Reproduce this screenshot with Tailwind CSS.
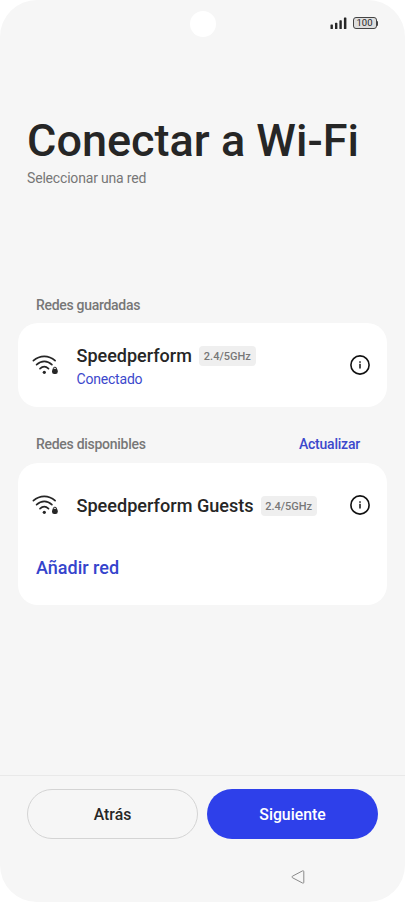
<!DOCTYPE html>
<html lang="es">
<head>
<meta charset="utf-8">
<title>Conectar a Wi-Fi</title>
<script src="https://cdn.jsdelivr.net/npm/@tailwindcss/browser@4"></script>
</head>
<body class="bg-white font-['Roboto',sans-serif]">
<svg class="hidden">
  <symbol id="wifi" viewBox="0 0 28 22">
    <g fill="none" stroke="#262626" stroke-width="1.7" stroke-linecap="round">
      <path d="M2.4 6.7C8.8.9 17.7.9 24.1 6.7"/>
      <path d="M5.6 10.7c4.7-4.4 10.7-4.4 15.3 0"/>
      <path d="M9 14.6c2.6-2.4 5.9-2.4 8.5 0"/>
    </g>
    <circle cx="13.3" cy="18.3" r="1.6" fill="#262626"/>
    <path d="M22.2 15.6v-.7a1.7 1.7 0 0 1 3.4 0v.7" fill="none" stroke="#262626" stroke-width="1"/>
    <rect x="21" y="14.7" width="5.8" height="5.2" rx="2.2" fill="#262626"/>
  </symbol>
  <symbol id="info" viewBox="0 0 20 20">
    <circle cx="10" cy="10" r="9.1" fill="none" stroke="#111" stroke-width="1.6"/>
    <rect x="9.2" y="6.3" width="1.6" height="1.5" fill="#222"/>
    <rect x="9.2" y="8.8" width="1.6" height="4.7" fill="#222"/>
  </symbol>
</svg>
<div class="relative flex h-[902px] w-[405px] flex-col overflow-hidden rounded-[37px] bg-[#f6f6f6] text-[#262626]">
  <div class="absolute left-[190px] top-[11px] size-[25.5px] rounded-full bg-white"></div>
  <header class="flex h-[47px] items-center justify-end gap-[5.5px] pr-[27px]">
    <svg class="mb-px h-3 w-[17px]" viewBox="0 0 17 12" fill="#262626"><rect x="0.5" y="7.5" width="2.4" height="4.5" rx=".6"/><rect x="5" y="5.8" width="2.4" height="6.2" rx=".6"/><rect x="9.4" y="3.3" width="2.4" height="8.7" rx=".6"/><rect x="13.9" y="0.5" width="2.5" height="11.5" rx=".6"/></svg>
    <div class="mb-px flex items-center">
      <div class="flex h-3 w-6 items-center justify-center rounded-[3px] border border-[#444] bg-[#dedede] text-[9.5px] leading-none">100</div>
      <div class="h-[5px] w-[1.5px] rounded-r-sm bg-[#444]"></div>
    </div>
  </header>
  <div class="px-[27px] pt-[66px]">
    <h1 class="h-[55px] whitespace-nowrap text-[45px] leading-[56px] font-medium">Conectar a Wi-Fi</h1>
    <p class="text-[14px] leading-5 tracking-[-0.18px] text-[#777]">Seleccionar una red</p>
  </div>
  <main class="flex-1 px-[18px] pt-[107px]">
    <h2 class="h-[28.3px] px-[18px] text-[14px] leading-5 font-medium tracking-[-0.3px] text-[#777]">Redes guardadas</h2>
    <section class="flex h-[83.4px] items-center rounded-[20px] bg-white pr-[17px] pl-[13px]">
      <svg class="h-[22px] w-7 shrink-0"><use href="#wifi"/></svg>
      <div class="ml-[17.5px] flex-1 pt-[6px]">
        <div class="flex h-[24px] items-center gap-[7px]"><span class="text-[18px] leading-6 font-medium">Speedperform</span><span class="h-5 rounded bg-[#efefef] px-[5px] text-[11px] leading-[21px] font-medium text-[#777]">2.4/5GHz</span></div>
        <p class="h-6 text-[14px] leading-[23px] tracking-[-0.2px] text-[#3c48cc]">Conectado</p>
      </div>
      <svg class="size-5 shrink-0"><use href="#info"/></svg>
    </section>
    <div class="flex h-[56.6px] items-center justify-between pr-[27px] pl-[18px] pt-[18px] text-[14px] leading-5 font-medium">
      <h2 class="tracking-[-0.28px] text-[#777]">Redes disponibles</h2>
      <span class="mt-px tracking-[-0.22px] text-[#3c48cc]">Actualizar</span>
    </div>
    <section class="h-[141.7px] rounded-[20px] bg-white">
      <div class="flex h-[84px] items-center pr-[17px] pl-[13px]">
        <svg class="h-[22px] w-7 shrink-0"><use href="#wifi"/></svg>
        <div class="mt-[2px] ml-[17.5px] flex flex-1 items-center gap-[7px] whitespace-nowrap"><span class="text-[18.1px] leading-6 font-medium">Speedperform Guests</span><span class="h-5 rounded bg-[#efefef] px-[4.5px] text-[11px] leading-[21px] font-medium text-[#777]">2.4/5GHz</span></div>
        <svg class="size-5 shrink-0"><use href="#info"/></svg>
      </div>
      <div class="px-[18px] pt-[9px] text-[18px] leading-6 font-medium text-[#3544cc]">Añadir red</div>
    </section>
  </main>
  <footer class="h-[127px] border-t border-[#e9e9e9] px-[27px] pt-[13px]">
    <div class="flex gap-[9px] text-[15.8px] font-medium">
      <button class="h-[50px] w-[171px] rounded-full border border-[#d4d4d4] pt-[2px]">Atrás</button>
      <button class="h-[50px] w-[171px] rounded-full bg-[#2e40ea] pt-[2px] text-white">Siguiente</button>
    </div>
    <div class="flex justify-end pt-[31px] pr-[73px]">
      <svg class="h-[14px] w-[14px]" viewBox="0 0 14 14"><path d="M1.4 6.2 11.5.9q1.3-.5 1.3.8v10.6q0 1.3-1.3.7L1.4 7.7Q.4 7 1.4 6.2Z" fill="none" stroke="#8a8a8a" stroke-width="1"/></svg>
    </div>
  </footer>
</div>
</body>
</html>
